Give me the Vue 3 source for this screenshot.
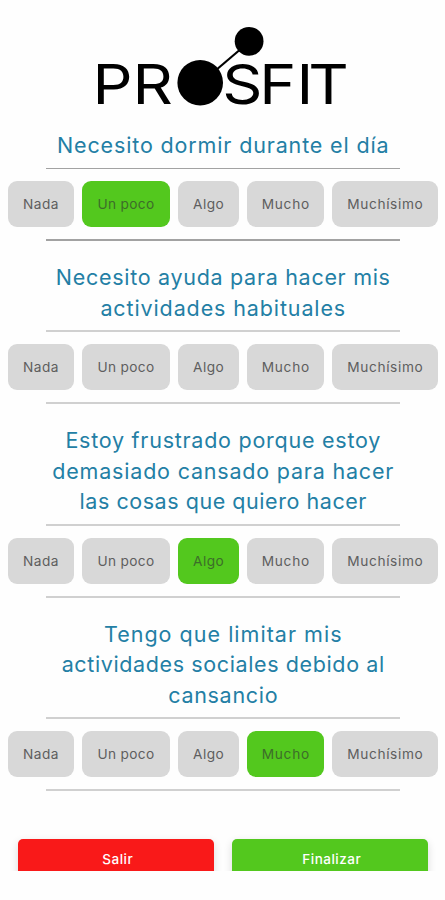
<template>
  <div class="screen">
    <header class="header">
      <svg class="logo" viewBox="0 0 260 110" role="img" aria-label="PROSFIT">
        <line x1="109" y1="60" x2="156" y2="20" stroke="#000" stroke-width="2.2" />
        <circle cx="107.2" cy="60.7" r="22.8" />
        <circle cx="156.1" cy="19.3" r="14.4" />
        <g transform="scale(1.14 1)">
          <text y="82.2" x="-0.4 34.6">PR</text>
          <text y="82.2" x="113.4 145.8 178.6 188.9">SFIT</text>
        </g>
      </svg>
    </header>

    <main class="questions">
      <section
        v-for="(question, index) in questions"
        :key="index"
        class="question"
        :class="{ first: index === 0 }"
      >
        <h2 class="title">
          <span
            v-for="line in question.lines"
            :key="line.text"
            class="title-line"
            :style="{ letterSpacing: `${line.spacing}px` }"
          >{{ line.text }}</span>
        </h2>
        <div class="options">
          <button
            v-for="(option, value) in options"
            :key="option.label"
            type="button"
            class="option"
            :class="[option.name, { selected: question.answer === value }]"
            @click="question.answer = value"
          >{{ option.label }}</button>
        </div>
      </section>
    </main>

    <footer class="actions">
      <button type="button" class="action exit">Salir</button>
      <button type="button" class="action finish">Finalizar</button>
    </footer>
  </div>
</template>

<script setup>
import { ref } from "vue";

const options = [
  { label: "Nada", name: "nada" },
  { label: "Un poco", name: "un-poco" },
  { label: "Algo", name: "algo" },
  { label: "Mucho", name: "mucho" },
  { label: "Muchísimo", name: "muchisimo" },
];

const questions = ref([
  {
    lines: [{ text: "Necesito dormir durante el día", spacing: 0.85 }],
    answer: 1,
  },
  {
    lines: [
      { text: "Necesito ayuda para hacer mis", spacing: 0.7 },
      { text: "actividades habituales", spacing: 0.88 },
    ],
    answer: null,
  },
  {
    lines: [
      { text: "Estoy frustrado porque estoy", spacing: 0.75 },
      { text: "demasiado cansado para hacer", spacing: 0.8 },
      { text: "las cosas que quiero hacer", spacing: 0.55 },
    ],
    answer: 2,
  },
  {
    lines: [
      { text: "Tengo que limitar mis", spacing: 1.02 },
      { text: "actividades sociales debido al", spacing: 0.62 },
      { text: "cansancio", spacing: 0.7 },
    ],
    answer: 3,
  },
]);
</script>

<style>
body {
  background: #fefefe;
}
</style>

<style scoped>
.screen {
  width: 445px;
  height: 870.7px;
  overflow: hidden;
  font-family: Inter, "Open Sans", sans-serif;
}

.header {
  height: 121.2px;
  box-sizing: border-box;
  padding: 22px 0 0 92.5px;
}

.logo {
  display: block;
  width: 260px;
  height: 110px;
}

.logo text {
  font-size: 55px;
  font-weight: 400;
}

.question {
  display: flex;
  flex-direction: column;
  padding-top: 21px;
}

.question.first {
  padding-top: 8.7px;
}

.title {
  margin: 0;
  text-align: center;
  font-size: 21.5px;
  font-weight: 400;
  line-height: 30.5px;
  color: #237fa5;
}

.title-line {
  display: block;
  padding-left: 1.5px;
  white-space: nowrap;
}

.question::after,
.title::after {
  content: "";
  display: block;
  width: 354px;
  height: 2px;
  margin: 0 0 0 46px;
  background: #d0d0d0;
}

.title::after {
  margin-top: 7.2px;
}

.first::after,
.first .title::after {
  height: 1.5px;
  margin-bottom: 0.5px;
  background: #a2a2a2;
}

.options {
  display: flex;
  gap: 8px;
  padding: 11.7px 8px 12px;
}

.option {
  flex: none;
  height: 46px;
  padding: 0;
  border: 0;
  border-radius: 9px;
  background: #d8d8d8;
  color: #5e5e5e;
  font-family: inherit;
  font-size: 13.7px;
  letter-spacing: 0.5px;
  text-align: center;
}

.option.selected {
  background: #53c81e;
  color: #3d6d2a;
}

.nada {
  width: 66px;
}

.un-poco {
  width: 88px;
  letter-spacing: 0.3px;
}

.algo {
  width: 61.3px;
}

.mucho {
  width: 77px;
  letter-spacing: 0.7px;
}

.muchisimo {
  width: 106px;
  letter-spacing: 0.65px;
}

.actions {
  display: flex;
  gap: 17.5px;
  padding: 48.2px 17px 0 17.5px;
}

.action {
  flex: 1;
  height: 40px;
  padding: 0 0 0 4px;
  border: 0;
  border-radius: 5px;
  box-shadow: 0 3px 8px rgba(0, 0, 0, 0.14);
  color: #fff;
  font-family: inherit;
  font-size: 13.5px;
  font-weight: 500;
  letter-spacing: 0.5px;
}

.exit {
  background: #f91919;
}

.finish {
  background: #53c81e;
}
</style>
